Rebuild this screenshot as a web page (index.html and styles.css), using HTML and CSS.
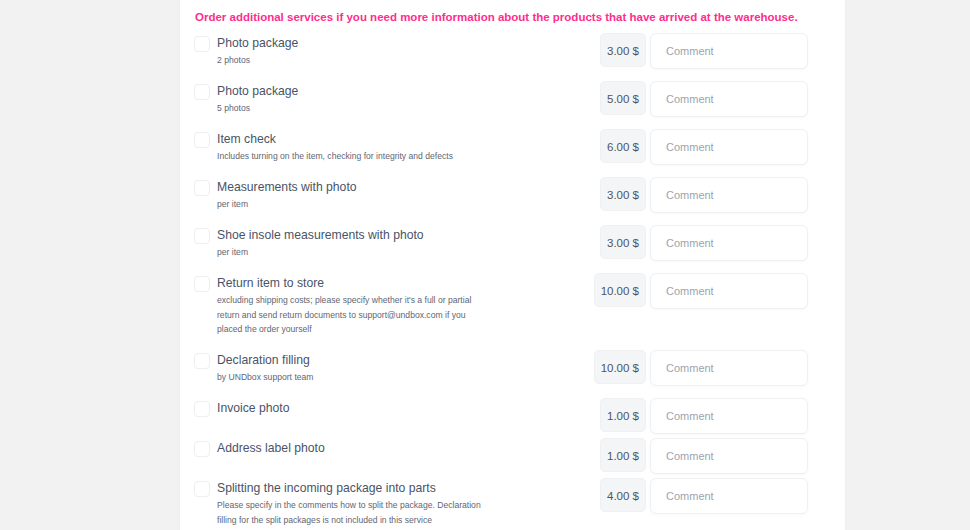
FILE: index.html
```html
<!DOCTYPE html>
<html lang="en">

<head>
    <meta charset="UTF-8">
    <meta name="viewport" content="width=device-width, initial-scale=1.0">
    <title> Additional services </title>

    <link rel="stylesheet" href="styles.css">
</head>

<body>
    <div id="wrap">
        <div class="services">
            <h2 class="services_title">Order additional services if you need more information about the products that have arrived at the warehouse.</h2>
            <ul class="service_list">
                <li class="service">
                    <label class="service_info">
                        <input type="checkbox" class="service_check">
                        <span class="service_text">
                            <span class="service_name">Photo package</span>
                            <span class="service_desc">2 photos</span>
                        </span>
                    </label>
                    <div class="service_price">3.00 $</div>
                    <input type="text" class="service_comment" placeholder="Comment">
                </li>
                <li class="service">
                    <label class="service_info">
                        <input type="checkbox" class="service_check">
                        <span class="service_text">
                            <span class="service_name">Photo package</span>
                            <span class="service_desc">5 photos</span>
                        </span>
                    </label>
                    <div class="service_price">5.00 $</div>
                    <input type="text" class="service_comment" placeholder="Comment">
                </li>
                <li class="service">
                    <label class="service_info">
                        <input type="checkbox" class="service_check">
                        <span class="service_text">
                            <span class="service_name">Item check</span>
                            <span class="service_desc">Includes turning on the item, checking for integrity and defects</span>
                        </span>
                    </label>
                    <div class="service_price">6.00 $</div>
                    <input type="text" class="service_comment" placeholder="Comment">
                </li>
                <li class="service">
                    <label class="service_info">
                        <input type="checkbox" class="service_check">
                        <span class="service_text">
                            <span class="service_name">Measurements with photo</span>
                            <span class="service_desc">per item</span>
                        </span>
                    </label>
                    <div class="service_price">3.00 $</div>
                    <input type="text" class="service_comment" placeholder="Comment">
                </li>
                <li class="service">
                    <label class="service_info">
                        <input type="checkbox" class="service_check">
                        <span class="service_text">
                            <span class="service_name">Shoe insole measurements with photo</span>
                            <span class="service_desc">per item</span>
                        </span>
                    </label>
                    <div class="service_price">3.00 $</div>
                    <input type="text" class="service_comment" placeholder="Comment">
                </li>
                <li class="service">
                    <label class="service_info">
                        <input type="checkbox" class="service_check">
                        <span class="service_text">
                            <span class="service_name">Return item to store</span>
                            <span class="service_desc">excluding shipping costs; please specify whether it's a full or partial return and send return documents to support@undbox.com if you placed the order yourself</span>
                        </span>
                    </label>
                    <div class="service_price">10.00 $</div>
                    <input type="text" class="service_comment" placeholder="Comment">
                </li>
                <li class="service">
                    <label class="service_info">
                        <input type="checkbox" class="service_check">
                        <span class="service_text">
                            <span class="service_name">Declaration filling</span>
                            <span class="service_desc">by UNDbox support team</span>
                        </span>
                    </label>
                    <div class="service_price">10.00 $</div>
                    <input type="text" class="service_comment" placeholder="Comment">
                </li>
                <li class="service">
                    <label class="service_info">
                        <input type="checkbox" class="service_check">
                        <span class="service_text">
                            <span class="service_name">Invoice photo</span>
                        </span>
                    </label>
                    <div class="service_price">1.00 $</div>
                    <input type="text" class="service_comment" placeholder="Comment">
                </li>
                <li class="service">
                    <label class="service_info">
                        <input type="checkbox" class="service_check">
                        <span class="service_text">
                            <span class="service_name">Address label photo</span>
                        </span>
                    </label>
                    <div class="service_price">1.00 $</div>
                    <input type="text" class="service_comment" placeholder="Comment">
                </li>
                <li class="service">
                    <label class="service_info">
                        <input type="checkbox" class="service_check">
                        <span class="service_text">
                            <span class="service_name">Splitting the incoming package into parts</span>
                            <span class="service_desc">Please specify in the comments how to split the package. Declaration filling for the split packages is not included in this service</span>
                        </span>
                    </label>
                    <div class="service_price">4.00 $</div>
                    <input type="text" class="service_comment" placeholder="Comment">
                </li>
            </ul>
        </div>
    </div>
</body>

</html>
```

FILE: styles.css
```css
* {
    margin: 0;
    padding: 0;
    box-sizing: border-box;
}

ul li {
    list-style: none;
}

body {
    background-color: #f3f2f3;
    font-family: "Liberation Sans", Arial, sans-serif;
    color: #4b5563;
    height: 530px;
    overflow: hidden;
}

#wrap {
    width: 665px;
    margin-left: 180px;
}

.services {
    background-color: #fff;
    min-height: 530px;
    padding: 10px 37px 0 14px;
    box-shadow: 0 0 6px rgba(0, 0, 0, 0.03);
}

.services_title {
    color: #ff2d8e;
    font-size: 11.5px;
    font-weight: bold;
    line-height: 14px;
    margin-left: 1px;
    margin-bottom: 9px;
}

.service_list {
    display: flex;
    flex-direction: column;
    gap: 4px;
}

.service {
    display: flex;
    align-items: flex-start;
}

.service_info {
    flex: 1;
    display: flex;
    align-items: flex-start;
    padding-bottom: 9.5px;
}

.service_check {
    appearance: none;
    width: 16px;
    height: 16px;
    margin-top: 3px;
    margin-right: 7px;
    border: 1px solid #eceef1;
    border-radius: 4px;
    background-color: #fff;
    flex-shrink: 0;
}

.service_text {
    display: flex;
    flex-direction: column;
    max-width: 272px;
}

.service_name {
    font-size: 12.2px;
    line-height: 20px;
    color: #4a5466;
}

.service_desc {
    font-size: 8.6px;
    line-height: 14.5px;
    color: #5f6673;
}

.service_price {
    height: 34px;
    padding: 0 6px;
    line-height: 34px;
    font-size: 11.5px;
    color: #4b5563;
    background-color: #f4f5f7;
    border: 1px solid #eef0f2;
    border-radius: 5px;
    margin-right: 4px;
    white-space: nowrap;
}

.service_comment {
    width: 158px;
    height: 36px;
    padding: 0 15px;
    font-family: "Liberation Sans", Arial, sans-serif;
    font-size: 11px;
    color: #374151;
    border: 1px solid #eef0f2;
    border-radius: 6px;
    box-shadow: 0 1px 3px rgba(0, 0, 0, 0.03);
    outline: none;
}

.service_comment::placeholder {
    color: #9ca3af;
}
```
